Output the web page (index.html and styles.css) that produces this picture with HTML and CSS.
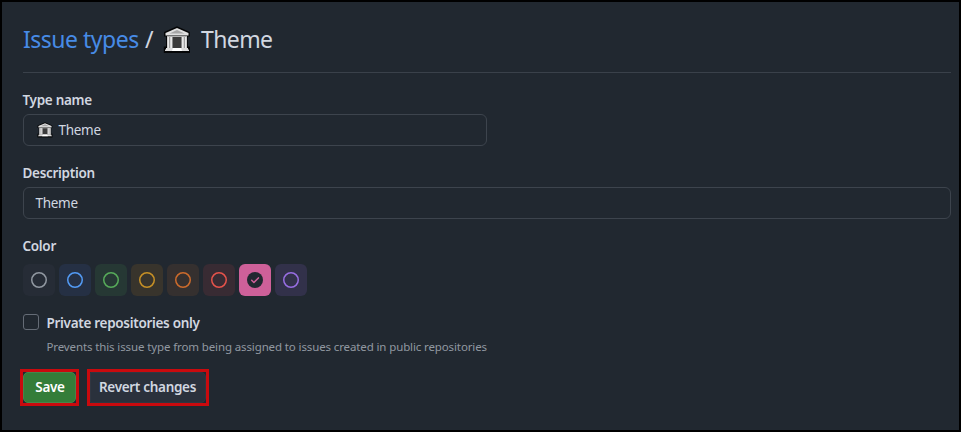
FILE: index.html
```
<!DOCTYPE html>
<html lang="en">
<head>
<meta charset="utf-8">
<title>Issue types / Theme</title>
<link rel="stylesheet" href="styles.css">
</head>
<body>
<svg class="defs" aria-hidden="true">
  <symbol id="building" viewBox="0 0 28 28">
    <path d="M14 .3 26.800 6v4.500h-2v10H27V27H.8v-6.500H3v-10H1V6z" fill="#050607"/>
    <path d="M14 2 25.500 7v2.500h-23V7z" fill="#e0e0e0"/>
    <path d="M14 4 21.500 7.500h-15z" fill="#a6a6a6"/>
    <path d="M4 10h20v12H4z" fill="#b0b0b0"/>
    <path d="M4.500 11H9v11H4.500zM19 11h4.500v11H19z" fill="#e8e8e8"/>
    <path d="M6.700 11v11M21.300 11v11" stroke="#777" stroke-width=".8"/>
    <path d="M10 11h8v11h-8z" fill="#3b3b3b"/>
    <path d="M9.500 11v11M18.500 11v11" stroke="#888"/>
    <path d="M3 22h22v1.500h1V25H2v-1.500h1z" fill="#dcdcdc"/>
    <path d="M10 22h8l1 3H9z" fill="#fff"/>
  </symbol>
  <symbol id="ring" viewBox="0 0 16 16">
    <circle cx="8" cy="8" r="7.250" fill="none" stroke="currentColor" stroke-width="1.500"/>
  </symbol>
</svg>
<main class="page">
  <h1 class="title"><a class="crumb">Issue types</a><span class="slash">/</span><svg class="title-icon"><use href="#building"/></svg><span class="current">Theme</span></h1>
  <form class="form">
    <div class="field">
      <label class="label">Type name</label>
      <div class="input input-short"><svg class="input-icon"><use href="#building"/></svg><span>Theme</span></div>
    </div>
    <div class="field">
      <label class="label">Description</label>
      <div class="input"><span>Theme</span></div>
    </div>
    <div class="colors-field">
      <label class="label">Color</label>
      <div class="swatches">
        <span class="swatch gray"><svg class="ring"><use href="#ring"/></svg></span>
        <span class="swatch blue"><svg class="ring"><use href="#ring"/></svg></span>
        <span class="swatch green"><svg class="ring"><use href="#ring"/></svg></span>
        <span class="swatch yellow"><svg class="ring"><use href="#ring"/></svg></span>
        <span class="swatch orange"><svg class="ring"><use href="#ring"/></svg></span>
        <span class="swatch red"><svg class="ring"><use href="#ring"/></svg></span>
        <span class="swatch pink"><svg class="ring" viewBox="0 0 16 16"><circle cx="8" cy="8" r="8" fill="#212830"/><path d="m4.700 8.300 2.200 2.200 4.500-4.600" fill="none" stroke="#ce6099" stroke-width="1.500" stroke-linecap="round" stroke-linejoin="round"/></svg></span>
        <span class="swatch purple"><svg class="ring"><use href="#ring"/></svg></span>
      </div>
    </div>
    <div class="private">
      <span class="checkbox"></span>
      <div>
        <div class="private-label">Private repositories only</div>
        <div class="hint">Prevents this issue type from being assigned to issues created in public repositories</div>
      </div>
    </div>
    <div class="actions">
      <div class="marked"><span class="button save">Save</span></div>
      <div class="marked marked-wide"><span class="button revert">Revert changes</span></div>
    </div>
  </form>
</main>
</body>
</html>
```
FILE: styles.css
```
* { box-sizing: border-box; }
body { margin: 0; background: #212830; color: #d1d7e0; font: 13.500px/20px "Noto Sans", "Open Sans", sans-serif; }
.defs { position: absolute; width: 0; height: 0; }
.page { width: 961px; height: 432px; border: 2px solid #000; padding: 20px 8px 0 21px; overflow: hidden; }
.title { display: flex; align-items: center; height: 51px; margin: 0; padding-bottom: 16px; border-bottom: 1px solid #3a414a; font-size: 23px; line-height: 34px; font-weight: 400; }
.crumb { width: 122px; color: #478be6; letter-spacing: -.5px; white-space: nowrap; }
.slash { width: 18px; }
.title-icon { width: 28px; height: 28px; margin-top: 1px; flex: none; }
.current { margin-left: 10px; letter-spacing: -.6px; }
.form { padding-top: 17px; }
.field { height: 73px; }
.label { display: block; height: 24px; margin-left: -.5px; font-weight: 600; letter-spacing: -.3px; }
.input { display: flex; align-items: center; height: 32px; border: 1px solid #3d444d; border-radius: 6px; padding-left: 11.500px; letter-spacing: -.3px; }
.input-short { width: 464px; }
.input-icon { width: 16px; height: 16px; margin: 0 5.500px 0 1.500px; }
.swatches { display: flex; gap: 4px; margin-top: 4px; }
.swatch { display: flex; align-items: center; justify-content: center; width: 32px; height: 32px; border-radius: 6px; }
.ring { width: 16px; height: 16px; }
.gray { background: #262c36; color: #9198a1; }
.blue { background: #253044; color: #539bf5; }
.green { background: #263834; color: #57ab5a; }
.yellow { background: #38342c; color: #c69026; }
.orange { background: #35302f; color: #cc6b2c; }
.red { background: #382b33; color: #e5534b; }
.pink { background: #ce6099; }
.purple { background: #32314a; color: #986ee2; }
.private { display: flex; margin-top: 17px; gap: 7.500px; }
.checkbox { width: 16px; height: 16px; margin-top: 1px; border: 1px solid #656c76; border-radius: 3px; }
.private-label { font-weight: 600; letter-spacing: -.3px; }
.hint { margin-top: 4px; font-size: 11.500px; color: #9198a1; letter-spacing: -.12px; white-space: nowrap; }
.actions { display: flex; gap: 8px; margin: 12px 0 0 -3px; }
.marked { display: flex; width: 59px; height: 37px; border: 3px solid #c90a0e; }
.marked-wide { width: 122px; }
.button { display: flex; align-items: center; justify-content: center; width: 100%; padding-bottom: 1px; border-radius: 5px; font-weight: 600; letter-spacing: -.3px; white-space: nowrap; }
.save { padding-left: 1px; background: #347d39; border: 1px solid #47854b; color: #fff; }
.revert { padding-right: 1px; background: #2a313c; border: 1px solid #303641; border-radius: 0 5px 5px 0; }
```
